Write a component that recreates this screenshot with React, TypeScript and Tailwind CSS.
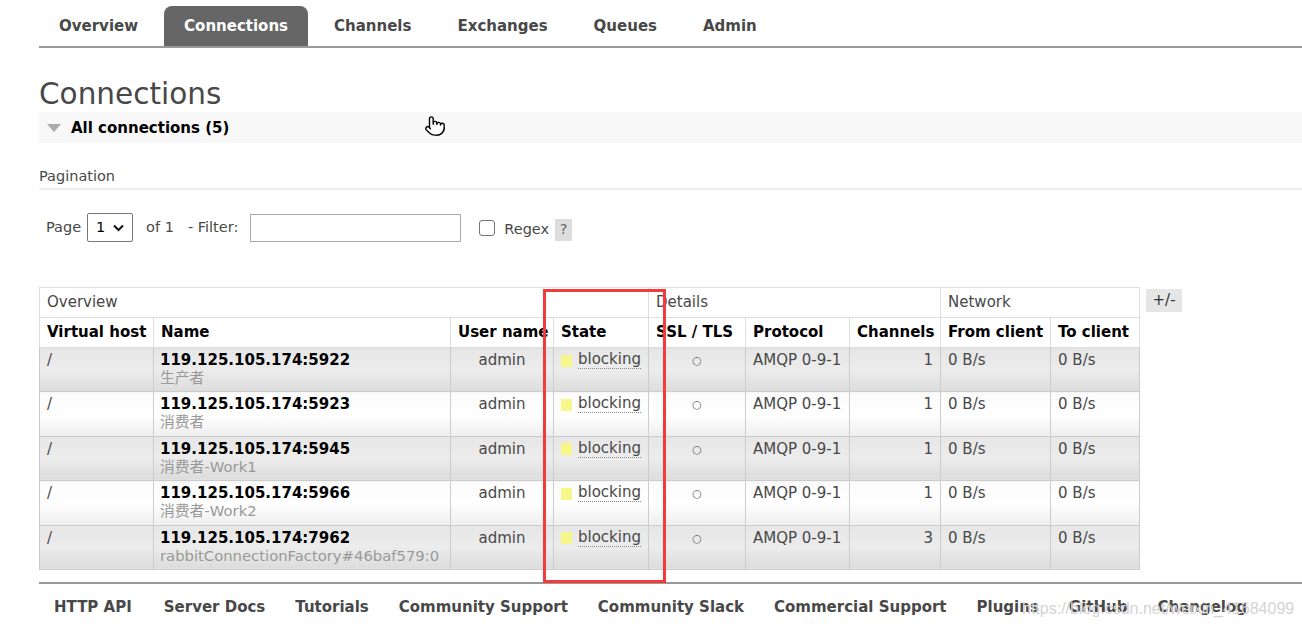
import React from 'react';
import { Pointer } from 'lucide-react';

interface Conn {
  name: string;
  client: string;
  channels: number;
}

const CONNECTIONS: Conn[] = [
  { name: '119.125.105.174:5922', client: '生产者', channels: 1 },
  { name: '119.125.105.174:5923', client: '消费者', channels: 1 },
  { name: '119.125.105.174:5945', client: '消费者-Work1', channels: 1 },
  { name: '119.125.105.174:5966', client: '消费者-Work2', channels: 1 },
  { name: '119.125.105.174:7962', client: 'rabbitConnectionFactory#46baf579:0', channels: 3 },
];

const TABS = ['Overview', 'Connections', 'Channels', 'Exchanges', 'Queues', 'Admin'];
const FOOTER = [
  'HTTP API',
  'Server Docs',
  'Tutorials',
  'Community Support',
  'Community Slack',
  'Commercial Support',
  'Plugins',
  'GitHub',
  'Changelog',
];

const App: React.FC = () => {
  return (
    <div className="relative w-[1302px] h-[627px] overflow-hidden bg-white pl-[39px] text-[15px] text-[#484848] font-['DejaVu_Sans','Noto_Sans_CJK_SC',sans-serif]">
      {/* top navigation */}
      <nav className="flex gap-[6px] pt-[6px] border-b-2 border-[#999]">
        {TABS.map((tab) => (
          <div
            key={tab}
            className={`h-[40px] px-[20px] pt-[1px] flex items-center font-bold rounded-t-[8px] ${
              tab === 'Connections' ? 'bg-[#666] text-white' : 'text-[#484848]'
            }`}
          >
            {tab}
          </div>
        ))}
      </nav>

      <h1 className="mt-[28px] text-[29.5px] leading-[36px] text-[#484848]">Connections</h1>

      <div className="h-[31px] bg-[#f8f8f8] flex items-center">
        <span className="ml-[8px] w-0 h-0 border-l-[7px] border-r-[7px] border-t-[8px] border-l-transparent border-r-transparent border-t-[#aaa]" />
        <span className="ml-[10px] mt-[1px] font-bold text-black">All connections (5)</span>
      </div>

      {/* pagination */}
      <div className="mt-[24px] pb-[3px] border-b-2 border-[#eee] text-[14.5px] leading-[18px]">Pagination</div>

      <div className="mt-[23px] flex items-center h-[29px] text-[14.5px]">
        <span className="ml-[7px]">Page</span>
        <div className="ml-[6px] w-[46px] h-[29px] border border-[#767676] rounded-[2px] flex items-center justify-between px-[8px] text-black">
          <span>1</span>
          <svg width="11" height="8" viewBox="0 0 11 8" className="mt-[1px]">
            <path d="M1 1.5 L5.5 6 L10 1.5" fill="none" stroke="#111" strokeWidth="2" />
          </svg>
        </div>
        <span className="ml-[13px]">of 1</span>
        <span className="ml-[14px]">- Filter:</span>
        <div className="ml-[12px] w-[211px] h-[28px] border border-[#aaa] bg-white" />
        <div className="ml-[18px] w-[16px] h-[16px] border border-[#767676] rounded-[3px] bg-white" />
        <span className="ml-[9px] mt-[4px]">Regex</span>
        <span className="ml-[6px] mt-[4px] w-[17px] h-[22px] bg-[#ddd] text-[#666] flex items-center justify-center">?</span>
      </div>

      {/* connections table */}
      <div className="mt-[45px] flex items-start gap-[6px]">
        <table className="table-fixed w-[1100px] border-collapse border border-[#ddd]">
          <colgroup>
            <col className="w-[114px]" />
            <col className="w-[297px]" />
            <col className="w-[103px]" />
            <col className="w-[95px]" />
            <col className="w-[97px]" />
            <col className="w-[104px]" />
            <col className="w-[91px]" />
            <col className="w-[110px]" />
            <col className="w-[89px]" />
          </colgroup>
          <thead>
            <tr className="h-[30px]">
              <th colSpan={4} className="border border-[#ddd] px-[7px] text-left font-normal text-[#484848]">Overview</th>
              <th colSpan={3} className="border border-[#ddd] px-[7px] text-left font-normal text-[#484848]">Details</th>
              <th colSpan={2} className="border border-[#ddd] px-[7px] text-left font-normal text-[#484848]">Network</th>
            </tr>
            <tr className="h-[30px] text-black">
              {['Virtual host', 'Name', 'User name', 'State', 'SSL / TLS', 'Protocol', 'Channels', 'From client', 'To client'].map((h) => (
                <th key={h} className="border border-[#ddd] px-[7px] text-left font-bold whitespace-nowrap overflow-hidden">
                  {h}
                </th>
              ))}
            </tr>
          </thead>
          <tbody>
            {CONNECTIONS.map((c, i) => {
              const bg =
                i % 2 === 0
                  ? 'bg-linear-to-b from-[#e6e6e6] via-[#ececec] to-[#dcdcdc]'
                  : 'bg-linear-to-b from-[#fbfbfb] via-white to-[#eeeeee]';
              const td = `border border-[#ccc] align-top pt-[3px] px-[7px] leading-[18px] ${bg}`;
              return (
                <tr key={c.name} className="h-[44.4px]">
                  <td className={td}>/</td>
                  <td className={td}>
                    <div className="font-bold text-black whitespace-nowrap -ml-[1px]">{c.name}</div>
                    <div className="text-[#999] whitespace-nowrap text-[14.8px] -ml-[1px]">{c.client}</div>
                  </td>
                  <td className={`${td} text-center`}>admin</td>
                  <td className={td}>
                    <div className="flex items-center">
                      <span className="w-[12px] h-[12px] bg-[#f6f68a] mr-[6px] mt-[1px]" />
                      <span className="border-b border-dotted border-[#888] leading-[17px]">blocking</span>
                    </div>
                  </td>
                  <td className={`${td} text-center text-[11px] text-[#666] pt-[4px]`}>○</td>
                  <td className={td}>AMQP 0-9-1</td>
                  <td className={`${td} text-right`}>{c.channels}</td>
                  <td className={td}>0 B/s</td>
                  <td className={td}>0 B/s</td>
                </tr>
              );
            })}
          </tbody>
        </table>
        <div className="mt-[2px] w-[36px] h-[23px] bg-[#e6e6e6] flex items-center justify-center text-[#333]">+/-</div>
      </div>

      {/* footer */}
      <footer className="mt-[12px] border-t-2 border-[#999] pt-[12px] flex gap-[30px] pl-[15px] font-bold text-[#484848] whitespace-nowrap">
        {FOOTER.map((f, i) => (
          <span key={f} className={i === 1 ? 'ml-[2px]' : ''}>
            {f}
          </span>
        ))}
      </footer>

      {/* overlays: annotation box, cursor, watermark */}
      <div className="absolute left-[543px] top-[289px] w-[123px] h-[294px] border-[3px] border-[#f43b3b]" />
      <div className="absolute left-[424px] top-[115px] text-black">
        <Pointer size={22} fill="white" strokeWidth={1.5} />
      </div>
      <div className="absolute left-[1022px] top-[597px] text-[16px] text-[#d4d4d4] font-['Liberation_Sans',sans-serif] whitespace-nowrap">
        https://blog.csdn.net/weixin_41684099
      </div>
    </div>
  );
};

export default App;
